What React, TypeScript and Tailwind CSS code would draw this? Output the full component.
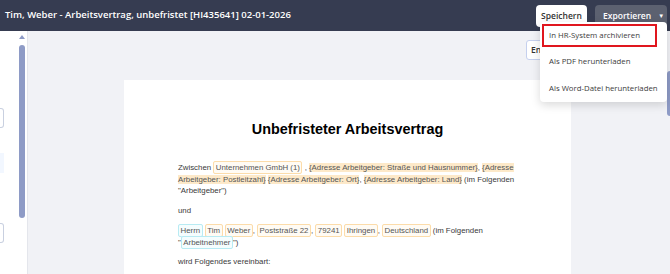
import React from "react";

function Chip({ children, cyan }: { children: React.ReactNode; cyan?: boolean }) {
  return (
    <span
      className={
        cyan
          ? "rounded-[2px] border border-[#b8ebf3] bg-[#f5fdfe] px-[1.5px] py-[1px] text-[#555]"
          : "rounded-[2px] border border-[#fcdcaa] bg-[#fffbf4] px-[1.5px] py-[1px] text-[#555]"
      }
    >
      {children}
    </span>
  );
}

function Ph({ children }: { children: React.ReactNode }) {
  return <span className="bg-[#fde9c9] text-[#555]">{children}</span>;
}

export default function App() {
  return (
    <div className="relative flex h-[274px] w-[670px] flex-col overflow-hidden bg-[#f1f2f6] font-['Open_Sans',sans-serif]">
      <header className="flex h-[31px] shrink-0 items-start justify-between bg-[#363c51] pl-[5px] pr-[3px]">
        <div className="mt-[8px] text-[9.5px] font-semibold text-white">
          Tim, Weber - Arbeitsvertrag, unbefristet [HI435641] 02-01-2026
        </div>
        <div className="mt-[5px] flex gap-[8px]">
          <button className="flex h-[22px] w-[51px] items-center justify-center rounded-[4px] bg-white text-[8.5px] font-semibold text-[#333]">
            Speichern
          </button>
          <button className="flex h-[22px] w-[72px] items-center gap-[7px] rounded-[4px] bg-[#5c6170] pl-[8px] text-[8.5px] font-semibold text-white">
            Exportieren
            <span className="text-[6px]">▼</span>
          </button>
        </div>
      </header>

      <div className="flex min-h-0 flex-1">
        {/* left panel */}
        <div className="flex w-[28px] shrink-0 border-r border-[#e4e6ec] bg-white">
          <div className="flex w-[4px] flex-col">
            <div className="mt-[77px] h-[20px] rounded-r-[3px] border border-l-0 border-[#c9d0e0]" />
            <div className="mt-[25px] h-[20px] bg-[#f2f7ff]" />
            <div className="mt-[50px] h-[20px] rounded-r-[3px] border border-l-0 border-[#c9d0e0]" />
          </div>
          <div className="ml-[15px] flex w-[6px] flex-col items-center">
            <div className="mt-[4px] h-0 w-0 border-x-[3px] border-b-[4px] border-x-transparent border-b-[#8e9bc6]" />
            <div className="mt-[6px] h-[173px] w-[6px] rounded-full bg-[#8e9bc6]" />
          </div>
        </div>

        {/* main */}
        <div className="flex min-w-0 flex-1">
          <div className="flex min-w-0 flex-1 flex-col">
            <div className="flex h-[49px] shrink-0 items-start pl-[498px] pt-[9px]">
              <button className="flex h-[20px] w-[60px] items-center rounded-[3px] border border-[#c5d0ee] bg-white pl-[4px] text-[8.5px] font-semibold text-[#333]">
                Entwurf
              </button>
            </div>
            <div className="ml-[96px] w-[447px] flex-1 bg-white pl-[54px] pt-[40px] font-['Liberation_Sans',Arial,sans-serif] text-[7.85px] leading-[11.7px] text-[#3a3a3a]">
              <h1 className="mb-[24px] pr-[54px] text-center text-[14.4px] leading-[18px] font-bold text-black">
                Unbefristeter Arbeitsvertrag
              </h1>
              <div className="whitespace-nowrap">
                <div>
                  Zwischen <Chip>Unternehmen GmbH (1)</Chip> , <Ph>{"{Adresse Arbeitgeber: Straße und Hausnummer}"}</Ph>, <Ph>{"{Adresse"}</Ph>
                </div>
                <div>
                  <Ph>{"Arbeitgeber: Postleitzahl}"}</Ph> <Ph>{"{Adresse Arbeitgeber: Ort}"}</Ph>, <Ph>{"{Adresse Arbeitgeber: Land}"}</Ph> (im Folgenden
                </div>
                <div>"Arbeitgeber")</div>
              </div>
              <p className="mt-[8px]">und</p>
              <div className="mt-[8px] whitespace-nowrap">
                <div>
                  <Chip cyan>Herrn</Chip> <Chip>Tim</Chip> <Chip>Weber</Chip>, <Chip>Poststraße 22</Chip>, <Chip>79241</Chip> <Chip>Ihringen</Chip>, <Chip>Deutschland</Chip> (im Folgenden
                </div>
                <div>
                  "<Chip cyan>Arbeitnehmer</Chip>")
                </div>
              </div>
              <p className="mt-[8px]">wird Folgendes vereinbart:</p>
            </div>
          </div>
          <div className="w-[3px] shrink-0">
            <div className="mt-[40px] h-[45px] w-[3px] rounded-l-full bg-[#8e9bc6]" />
          </div>
        </div>
      </div>

      {/* export dropdown */}
      <div className="absolute right-[3px] top-[22px] flex h-[80px] w-[127px] flex-col whitespace-nowrap rounded-[4px] bg-white p-[2px] text-[7.8px] text-[#3c3c3c] shadow-[0_3px_10px_rgba(0,0,0,0.15)]">
        <div className="flex h-[23px] w-[115px] items-center border-2 border-[#e0161e] pl-[5px]">
          In HR-System archivieren
        </div>
        <div className="flex h-[27px] items-center pl-[7px] pt-[4px]">Als PDF herunterladen</div>
        <div className="flex h-[27px] items-center pl-[7px] pt-[4px]">Als Word-Datei herunterladen</div>
      </div>
    </div>
  );
}
